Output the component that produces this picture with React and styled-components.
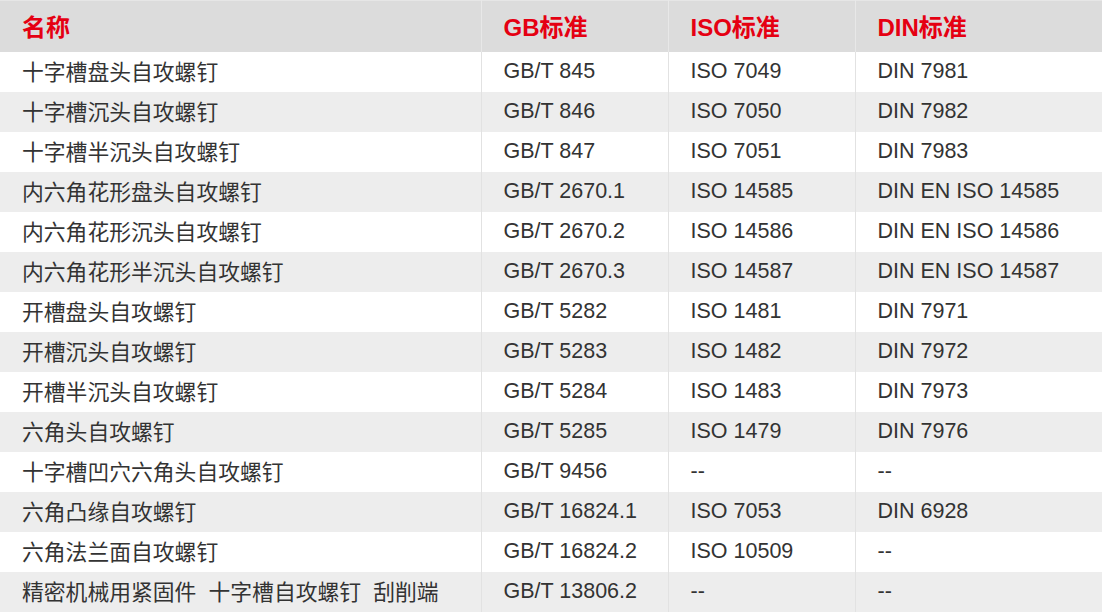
import React from "react";
import styled, { createGlobalStyle } from "styled-components";

const GlobalStyle = createGlobalStyle`
  html, body {
    margin: 0;
    padding: 0;
    background: #ffffff;
  }
  body {
    font-family: "Liberation Sans", "Noto Sans CJK SC", Arial, sans-serif;
  }
`;

const Table = styled.table`
  width: 1102px;
  border-collapse: collapse;
  table-layout: fixed;
`;

const HeadRow = styled.tr`
  height: 51px;
  background: #dcdcdc;
  border-top: 1px solid #e6e6e6;
`;

const HeadCell = styled.th`
  padding: 0 0 2px 22px;
  text-align: left;
  font-size: 24px;
  font-weight: bold;
  color: #e50012;
  border-left: ${(p) => (p.$first ? "none" : "1px solid #e8e8e8")};
`;

const Row = styled.tr`
  height: 40px;
  background: ${(p) => (p.$alt ? "#ededed" : "#ffffff")};
`;

const Cell = styled.td`
  padding: ${(p) => (p.$first ? "0 0 3px 22px" : "0 0 0 22px")};
  font-size: ${(p) => (p.$first ? "21.8px" : "21.5px")};
  color: #333333;
  white-space: nowrap;
  overflow: hidden;
  border-left: ${(p) => (p.$first ? "none" : "1px solid #e2e2e2")};
`;

const columns = [
  { label: "名称", width: 481 },
  { label: "GB标准", width: 187 },
  { label: "ISO标准", width: 187 },
  { label: "DIN标准", width: 247 },
];

const rows = [
  ["十字槽盘头自攻螺钉", "GB/T 845", "ISO 7049", "DIN 7981"],
  ["十字槽沉头自攻螺钉", "GB/T 846", "ISO 7050", "DIN 7982"],
  ["十字槽半沉头自攻螺钉", "GB/T 847", "ISO 7051", "DIN 7983"],
  ["内六角花形盘头自攻螺钉", "GB/T 2670.1", "ISO 14585", "DIN EN ISO 14585"],
  ["内六角花形沉头自攻螺钉", "GB/T 2670.2", "ISO 14586", "DIN EN ISO 14586"],
  ["内六角花形半沉头自攻螺钉", "GB/T 2670.3", "ISO 14587", "DIN EN ISO 14587"],
  ["开槽盘头自攻螺钉", "GB/T 5282", "ISO 1481", "DIN 7971"],
  ["开槽沉头自攻螺钉", "GB/T 5283", "ISO 1482", "DIN 7972"],
  ["开槽半沉头自攻螺钉", "GB/T 5284", "ISO 1483", "DIN 7973"],
  ["六角头自攻螺钉", "GB/T 5285", "ISO 1479", "DIN 7976"],
  ["十字槽凹穴六角头自攻螺钉", "GB/T 9456", "--", "--"],
  ["六角凸缘自攻螺钉", "GB/T 16824.1", "ISO 7053", "DIN 6928"],
  ["六角法兰面自攻螺钉", "GB/T 16824.2", "ISO 10509", "--"],
  ["精密机械用紧固件\u00a0\u00a0十字槽自攻螺钉\u00a0\u00a0刮削端", "GB/T 13806.2", "--", "--"],
];

const App = () => {
  return (
    <>
      <GlobalStyle />
      <Table>
        <colgroup>
          {columns.map((col) => (
            <col key={"col_" + col.label} style={{ width: col.width }} />
          ))}
        </colgroup>
        <thead>
          <HeadRow>
            {columns.map((col, index) => (
              <HeadCell key={"head_" + col.label} $first={index === 0}>
                {col.label}
              </HeadCell>
            ))}
          </HeadRow>
        </thead>
        <tbody>
          {rows.map((row, rowIndex) => (
            <Row key={"row_" + rowIndex} $alt={rowIndex % 2 === 1}>
              {row.map((value, index) => (
                <Cell key={"cell_" + rowIndex + "_" + index} $first={index === 0}>
                  {value}
                </Cell>
              ))}
            </Row>
          ))}
        </tbody>
      </Table>
    </>
  );
};

export default App;
